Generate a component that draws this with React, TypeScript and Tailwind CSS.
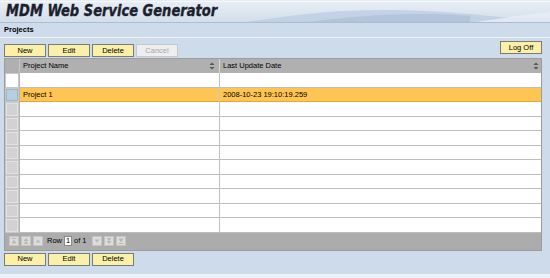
import React from 'react';

const font = { fontFamily: '"Liberation Sans", Arial, sans-serif' };

function Btn({ label, disabled }: { label: string; disabled?: boolean }) {
  return (
    <button
      className={
        disabled
          ? 'h-[13px] w-[42px] border border-[#c8c8c8] bg-[#eeeeee] text-[7.5px] leading-none text-[#a8a8a8]'
          : 'h-[13px] w-[42px] border border-[#7a7a7a] bg-[#fbf0a8] text-[7.5px] leading-none text-black'
      }
    >
      {label}
    </button>
  );
}

function SortIcon() {
  return (
    <svg width="6" height="8" viewBox="0 0 6 8" className="shrink-0">
      <path d="M3 0.5 L5.5 3 H0.5 Z" fill="#555" />
      <path d="M3 7.5 L5.5 5 H0.5 Z" fill="#555" />
    </svg>
  );
}

function PagerBtn({ kind }: { kind: 'first' | 'pgup' | 'up' | 'down' | 'pgdn' | 'last' }) {
  const c = '#b8b8b8';
  return (
    <div className="flex h-[10px] w-[10px] items-center justify-center border border-[#c4c4c4] bg-[#dcdcdc]">
      <svg width="6" height="6" viewBox="0 0 6 6">
        {kind === 'first' && (
          <>
            <rect x="0.5" y="0" width="5" height="1" fill={c} />
            <path d="M3 1.5 L5.5 5.5 H0.5 Z" fill={c} />
          </>
        )}
        {kind === 'pgup' && (
          <>
            <path d="M3 0 L5.5 3 H0.5 Z" fill={c} />
            <path d="M3 3 L5.5 6 H0.5 Z" fill={c} />
          </>
        )}
        {kind === 'up' && <path d="M3 1.5 L5.5 4.5 H0.5 Z" fill={c} />}
        {kind === 'down' && <path d="M3 4.5 L5.5 1.5 H0.5 Z" fill={c} />}
        {kind === 'pgdn' && (
          <>
            <path d="M3 3 L5.5 0 H0.5 Z" fill={c} />
            <path d="M3 6 L5.5 3 H0.5 Z" fill={c} />
          </>
        )}
        {kind === 'last' && (
          <>
            <path d="M3 4.5 L5.5 0.5 H0.5 Z" fill={c} />
            <rect x="0.5" y="5" width="5" height="1" fill={c} />
          </>
        )}
      </svg>
    </div>
  );
}

const rows = [
  { name: '', date: '' },
  { name: 'Project 1', date: '2008-10-23 19:10:19.259', selected: true },
  ...Array.from({ length: 9 }, () => ({ name: '', date: '' })),
];

export default function App() {
  return (
    <div className="flex h-[278px] w-[550px] flex-col bg-[#cddbea]" style={font}>
      {/* Title bar */}
      <div className="relative h-[23px] shrink-0 overflow-hidden border-b border-[#a9bdd3] bg-[linear-gradient(180deg,#e9eef5_0%,#dce5ef_60%,#d3deea_100%)]">
        <div className="absolute inset-x-0 top-[1px] h-px bg-[#f6f8fb]" />
        <svg className="absolute inset-0" width="550" height="23" viewBox="0 0 550 23">
          <path d="M240 23 C320 10 380 6 470 14 C500 17 520 20 550 18 V23 Z" fill="#b9cbe0" opacity="0.7" />
          <path d="M300 23 C370 14 420 12 470 16 L470 23 Z" fill="#a9bdd6" opacity="0.6" />
          <path d="M470 23 C500 18 530 14 550 12 V23 Z" fill="#e8eef6" opacity="0.8" />
        </svg>
        <div
          className="relative pl-[7px] pt-[2px] text-[15px] font-bold italic leading-[19px] text-[#1b1f2e] [-webkit-text-stroke:0.4px_#1b1f2e]"
          style={{ fontFamily: '"DejaVu Sans", Verdana, sans-serif', transform: 'scaleX(0.87)', transformOrigin: 'left' }}
        >
          MDM Web Service Generator
        </div>
      </div>

      {/* Section title */}
      <div className="flex h-[15px] shrink-0 items-center border-b border-[#eef3f9] pl-[4px] text-[7.5px] font-bold text-black">
        Projects
      </div>

      {/* Toolbar */}
      <div className="flex h-[20px] shrink-0 items-end justify-between px-[4px] pb-[1px]">
        <div className="flex gap-[2px]">
          <Btn label="New" />
          <Btn label="Edit" />
          <Btn label="Delete" />
          <Btn label="Cancel" disabled />
        </div>
        <div className="pr-[4px]">
          <Btn label="Log Off" />
        </div>
      </div>

      {/* Table */}
      <div className="mx-[4px] mr-[8px] flex shrink-0 flex-col border border-[#9c9c9c] bg-white">
        <div className="grid h-[14px] grid-cols-[15px_200px_1fr] bg-[#b0b0b0] text-[7.5px] text-black">
          <div className="border-r border-[#c8c8c8]" />
          <div className="flex items-center justify-between border-r border-[#d8d8d8] pl-[3px] pr-[4px]">
            <span>Project Name</span>
            <SortIcon />
          </div>
          <div className="flex items-center justify-between pl-[3px] pr-[2px]">
            <span>Last Update Date</span>
            <SortIcon />
          </div>
        </div>
        {rows.map((r, i) => (
          <div
            key={i}
            className={
              'grid h-[14.5px] grid-cols-[15px_200px_1fr] text-[7.5px] text-black ' +
              (r.selected ? 'bg-[#ffc552]' : 'bg-white')
            }
          >
            <div className="border-r border-[#b4b4b4] bg-[#c8c8c8] p-[1px]">
              <div
                className={
                  'h-full w-full border ' +
                  (r.selected
                    ? 'border-[#9fb6c8] bg-[#b3cfe0]'
                    : i === 0
                      ? 'border-white bg-white'
                      : 'border-[#e2e2e2] bg-[#d2d2d2]')
                }
              />
            </div>
            <div
              className={
                'flex items-center border-b border-r pl-[3px] ' +
                (r.selected ? 'border-[#e3a83a] border-r-[#c8c8c8]' : 'border-[#bdbdbd] border-r-[#c0c0c0]')
              }
            >
              {r.name}
            </div>
            <div
              className={
                'flex items-center border-b pl-[3px] ' + (r.selected ? 'border-[#e3a83a]' : 'border-[#bdbdbd]')
              }
            >
              {r.date}
            </div>
          </div>
        ))}
        {/* Pager */}
        <div className="flex h-[17px] items-center gap-[2px] bg-[#acacac] pl-[4px] text-[7.5px] text-black">
          <PagerBtn kind="first" />
          <PagerBtn kind="pgup" />
          <PagerBtn kind="up" />
          <span className="ml-[2px]">Row</span>
          <span className="flex h-[10px] w-[8px] items-center justify-center border border-[#8a8a8a] bg-white">1</span>
          <span className="mr-[3px]">of 1</span>
          <PagerBtn kind="down" />
          <PagerBtn kind="pgdn" />
          <PagerBtn kind="last" />
        </div>
      </div>

      {/* Bottom toolbar */}
      <div className="mt-[2px] flex shrink-0 gap-[2px] px-[4px]">
        <Btn label="New" />
        <Btn label="Edit" />
        <Btn label="Delete" />
      </div>

      <div className="flex-1" />
      <div className="h-[4px] shrink-0 bg-[#eef2f7]" />
    </div>
  );
}
